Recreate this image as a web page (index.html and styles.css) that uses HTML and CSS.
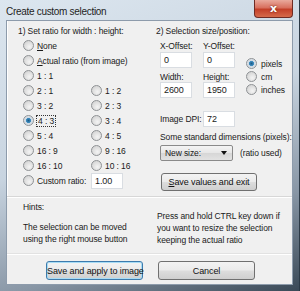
FILE: index.html
```html
<!DOCTYPE html>
<html lang="en">
<head>
    <meta charset="UTF-8">
    <title>Create custom selection</title>
    <link rel="stylesheet" href="styles.css">
</head>
<body>
    <div class="window">
        <div class="titlebar">
            <span class="title">Create custom selection</span>
            <div class="close">x</div>
        </div>
        <div class="client">
            <div class="top">
                <div class="panel ratio">
                    <div class="heading">1) Set ratio for width : height:</div>
                    <div class="ratios">
                        <label class="opt wide"><span class="radio"></span><span><u>N</u>one</span></label>
                        <label class="opt wide"><span class="radio"></span><span><u>A</u>ctual ratio (from image)</span></label>
                        <label class="opt wide"><span class="radio"></span><span>1 : 1</span></label>
                        <label class="opt"><span class="radio"></span><span>2 : 1</span></label>
                        <label class="opt"><span class="radio"></span><span>1 : 2</span></label>
                        <label class="opt"><span class="radio"></span><span>3 : 2</span></label>
                        <label class="opt"><span class="radio"></span><span>2 : 3</span></label>
                        <label class="opt"><span class="radio checked"></span><span class="focus">4 : 3</span></label>
                        <label class="opt"><span class="radio"></span><span>3 : 4</span></label>
                        <label class="opt"><span class="radio"></span><span>5 : 4</span></label>
                        <label class="opt"><span class="radio"></span><span>4 : 5</span></label>
                        <label class="opt"><span class="radio"></span><span>16 : 9</span></label>
                        <label class="opt"><span class="radio"></span><span>9 : 16</span></label>
                        <label class="opt"><span class="radio"></span><span>16 : 10</span></label>
                        <label class="opt"><span class="radio"></span><span>10 : 16</span></label>
                        <label class="opt"><span class="radio"></span><span>Custom ratio:</span></label>
                        <div class="opt"><span class="field">1.00</span></div>
                    </div>
                </div>
                <div class="panel size">
                    <div class="heading">2) Selection size/position:</div>
                    <div class="sizebox">
                        <div class="fields">
                            <span class="lbl">X-Offset:</span>
                            <span class="lbl">Y-Offset:</span>
                            <span class="field">0</span>
                            <span class="field">0</span>
                            <span class="lbl">Width:</span>
                            <span class="lbl">Height:</span>
                            <span class="field">2600</span>
                            <span class="field">1950</span>
                        </div>
                        <div class="units">
                            <label class="opt"><span class="radio checked"></span><span>pixels</span></label>
                            <label class="opt"><span class="radio"></span><span>cm</span></label>
                            <label class="opt"><span class="radio"></span><span>inches</span></label>
                        </div>
                    </div>
                    <div class="dpi">
                        <span class="lbl">Image DPI:</span>
                        <span class="field">72</span>
                    </div>
                    <div class="lbl std">Some standard dimensions (pixels):</div>
                    <div class="stdrow">
                        <div class="select"><span>New size:</span><span class="arrow"></span></div>
                        <span class="lbl">(ratio used)</span>
                    </div>
                    <button class="btn save-values"><u>S</u>ave values and exit</button>
                </div>
            </div>
            <div class="hints">
                <div class="hint-left">
                    <div>Hints:</div>
                    <p>The selection can be moved<br>using the right mouse button</p>
                </div>
                <div class="hint-right">
                    <p>Press and hold CTRL key down if<br>you want to resize the selection<br>keeping the actual ratio</p>
                </div>
            </div>
            <div class="buttons">
                <button class="btn default">Save and apply to image</button>
                <button class="btn">Cancel</button>
            </div>
        </div>
    </div>
</body>
</html>
```

FILE: styles.css
```css
body {
    margin: 0;
    padding: 0;
    background-color: #4a5866;
    font-family: "Liberation Sans", Arial, sans-serif;
    font-size: 8.5px;
    letter-spacing: -0.1px;
    color: #1a1a1a;
    white-space: nowrap;
}
.window {
    width: 300px;
    height: 291px;
    box-sizing: border-box;
    display: flex;
    flex-direction: column;
    padding: 0 6px 6px 6px;
    background: linear-gradient(160deg, #dce6ef 0%, #c8d4e0 45%, #8896a5 75%, #3a4957 100%);
    border-right: 1px solid #2b3946;
}
.titlebar {
    height: 20px;
    display: flex;
    align-items: center;
    justify-content: space-between;
}
.title {
    font-size: 10px;
    letter-spacing: -0.3px;
    color: #1e1e1e;
    padding-top: 3px;
}
.close {
    width: 37px;
    height: 17px;
    margin-top: -3px;
    border: 1px solid #6e2b24;
    border-top: none;
    border-radius: 0 0 4px 4px;
    background: linear-gradient(to bottom, #e9a99c 0%, #d8705e 45%, #c33f28 55%, #d56a4b 100%);
    color: #fff;
    font-family: "DejaVu Sans", sans-serif;
    font-weight: bold;
    font-size: 11px;
    display: flex;
    align-items: center;
    justify-content: center;
    text-shadow: 0 0 2px #5a150c;
}
.client {
    flex: 1;
    background-color: #f0f0f0;
    border: 1px solid #8d9bab;
    display: flex;
    flex-direction: column;
}
.top {
    display: flex;
    height: 175px;
    border-bottom: 1px solid #d7d7d7;
}
.panel {
    box-sizing: border-box;
}
.ratio {
    width: 139px;
    padding: 4px 0 0 10px;
    border-left: 1px solid #fff;
}
.size {
    flex: 1;
    padding: 4px 0 0 10px;
}
.heading {
    height: 13px;
    line-height: 13px;
}
.ratios {
    display: grid;
    grid-template-columns: 68px 1fr;
    padding-left: 5px;
}
.opt {
    display: flex;
    align-items: center;
    height: 15px;
    gap: 3px;
}
.opt.wide {
    grid-column: 1 / 3;
}
.radio {
    width: 9px;
    height: 9px;
    border-radius: 50%;
    border: 1px solid #8f9295;
    background: radial-gradient(circle at 60% 65%, #f4f4f4 0%, #dcdcdc 60%, #c9c9c9 100%);
    flex: none;
}
.radio.checked {
    background: radial-gradient(circle, #1c5a86 0%, #3d8cbf 35%, #cfd9e2 45%, #e8ecef 100%);
}
.focus {
    outline: 1px dotted #333;
    padding: 0 1px;
}
.field {
    box-sizing: border-box;
    display: block;
    width: 32px;
    height: 16px;
    line-height: 15px;
    padding-left: 3px;
    background-color: #fff;
    border: 1px solid #d9dde2;
    font-size: 9px;
}
.sizebox {
    display: flex;
    padding-left: 4px;
}
.fields {
    display: grid;
    grid-template-columns: 43px 43px;
    grid-template-rows: 13px 17px 14px 16px;
    align-items: end;
}
.units {
    padding-top: 19px;
}
.units .opt {
    height: 13px;
    gap: 4px;
}
.dpi {
    display: flex;
    align-items: center;
    padding: 13px 0 0 4px;
    gap: 2px;
}
.dpi .lbl {
    width: 41px;
}
.std {
    padding: 4px 0 0 4px;
    height: 13px;
    line-height: 13px;
}
.stdrow {
    display: flex;
    align-items: center;
    gap: 7px;
    padding: 1px 0 0 4px;
}
.select {
    box-sizing: border-box;
    width: 73px;
    height: 16px;
    display: flex;
    align-items: center;
    justify-content: space-between;
    padding: 0 5px 0 4px;
    border: 1px solid #8a8a8a;
    border-radius: 2px;
    background: linear-gradient(to bottom, #f4f4f4 0%, #e6e6e6 50%, #d6d6d6 51%, #e2e2e2 100%);
}
.arrow {
    width: 0;
    height: 0;
    border-left: 3px solid transparent;
    border-right: 3px solid transparent;
    border-top: 4px solid #111;
}
.btn {
    font-family: inherit;
    font-size: 9px;
    letter-spacing: -0.1px;
    color: #111;
    height: 18px;
    padding: 0;
    border: 1px solid #707070;
    border-radius: 3px;
    background: linear-gradient(to bottom, #f3f3f3 0%, #ebebeb 48%, #dddddd 52%, #cfcfcf 100%);
}
.save-values {
    width: 96px;
    margin: 12px 0 0 5px;
}
.hints {
    display: flex;
    height: 55px;
    border-top: 1px solid #fff;
    border-bottom: 1px solid #e2e2e2;
}
.hint-left {
    width: 139px;
    box-sizing: border-box;
    padding: 4px 0 0 16px;
}
.hint-right {
    padding: 12px 0 0 11px;
}
.hints p {
    margin: 0;
    line-height: 12px;
}
.hint-left p {
    margin-top: 9px;
}
.buttons {
    display: flex;
    gap: 15px;
    padding: 6px 0 0 39px;
    border-top: 1px solid #fff;
}
.buttons .btn {
    width: 97px;
    height: 19px;
}
.btn.default {
    border-color: #3d7bad;
    box-shadow: inset 0 0 0 1px #a8dcf5;
}
```
